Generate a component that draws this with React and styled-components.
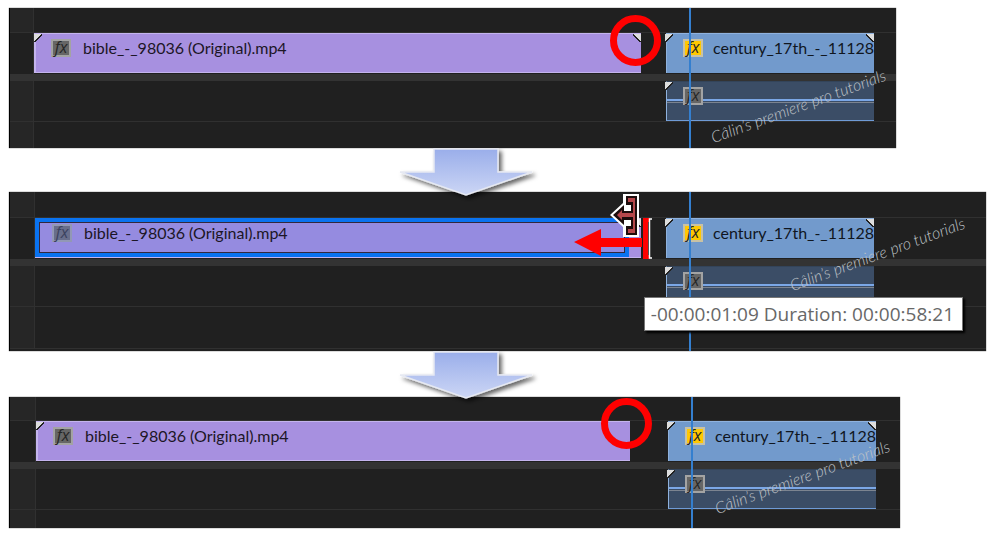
import React from 'react'
import styled, { createGlobalStyle, css } from 'styled-components'

const GlobalStyle = createGlobalStyle`
  * {
    box-sizing: border-box;
  }
  body {
    margin: 0;
    background: #fff;
    font-family: Lato, 'Open Sans', sans-serif;
  }
`

const Page = styled.main`
  padding: 8px 8px 8px 9px;
`

const Panel = styled.section`
  position: relative;
  margin-right: ${({ $inset }) => $inset}px;
  background: #202020;
  border-left: 1px solid #000;
  box-shadow: 0 0 1px #333;
`

const Track = styled.div`
  display: flex;
  height: ${({ $height }) => $height}px;
  border-bottom: ${({ $line }) => ($line ? '1px solid #303030' : 'none')};
`

const Gutter = styled.div`
  flex: none;
  width: ${({ $width }) => $width}px;
  background: ${({ $dark }) => ($dark ? '#202020' : '#262626')};
  border-right: 1px solid #303030;
`

const Divider = styled.div`
  height: 7px;
  background: #333;
`

const Lane = styled.div`
  flex: 1;
  min-width: 0;
  display: flex;
  padding-right: ${({ $tail }) => $tail}px;
`

const corner = css`
  content: '';
  position: absolute;
  top: 0;
  width: 8px;
  height: 8px;
`

const Clip = styled.div`
  position: relative;
  display: flex;
  align-items: flex-start;
  gap: 12px;
  height: 40px;
  padding: 5px 0 0 15px;
  white-space: nowrap;
  border-top: 1px solid #c4b4ee;
  border-left: 2px solid #c4b4ee;
  background: #a790e0;
  color: #1c1626;

  &::before {
    ${corner}
    left: -2px;
    background: linear-gradient(135deg, #ddd 0 45%, #222 45% 58%, transparent 58%);
  }
  &::after {
    ${corner}
    right: 0;
    display: ${({ $trimmed }) => ($trimmed ? 'none' : 'block')};
    background: linear-gradient(225deg, #ddd 0 45%, #222 45% 58%, transparent 58%);
  }
`

const MainClip = styled(Clip)`
  flex: 1;
  min-width: 0;
  border-bottom: 1px solid #c4b4ee;
`

const NextClip = styled(Clip)`
  flex: none;
  width: 208px;
  gap: 10px;
  margin-left: ${({ $gap }) => $gap}px;
  padding-left: 16px;
  border-color: #8fb2de;
  border-left-width: 1px;
  background: #729acc;
  color: #10161f;
`

const AudioClip = styled(NextClip)`
  height: 100%;
  margin-left: auto;
  border-top-color: #33445a;
  border-bottom: 1px solid #6f9bd6;
  background: linear-gradient(
    #3b4d66 0 17px,
    #7ba7e6 17px 19px,
    #3b4d66 19px 20px,
    #7c8490 20px 21px,
    #3b4d66 21px
  );

  &::after {
    display: none;
  }
`

const Name = styled.span`
  position: relative;
  z-index: 1;
  font-size: 16px;
  line-height: 18px;
`

const Badge = styled.span`
  flex: none;
  width: 20px;
  height: 18px;
  border: 2px solid ${({ $on }) => ($on ? '#c9c2a4' : '#a3a3a3')};
  background: ${({ $on }) => ($on ? '#ffc800' : '#666')};
  color: #262626;
  font: italic 16px/12px 'Open Sans', sans-serif;
  text-align: center;
`

const Selection = styled.div`
  position: absolute;
  inset: -1px 12px 0 -2px;
  border: 4px solid #0a73f0;
  outline: 1px solid #33283c;
  outline-offset: -5px;
  background: rgba(110, 130, 225, 0.3);
`

const Playhead = styled.div`
  position: absolute;
  z-index: 2;
  top: 0;
  bottom: 0;
  right: ${({ $right }) => $right}px;
  width: 2px;
  background: #347fcf;
`

const Ring = styled.div`
  position: absolute;
  z-index: 3;
  top: ${({ $top }) => $top}px;
  right: ${({ $right }) => $right}px;
  width: 51px;
  height: 51px;
  border: 7px solid #f00;
  border-radius: 50%;
`

const Watermark = styled.div`
  position: absolute;
  z-index: 3;
  right: ${({ $right }) => $right}px;
  top: ${({ $top }) => $top}px;
  color: #bfc2c6;
  font: italic 300 16px/20px Lato, sans-serif;
  white-space: nowrap;
  transform: rotate(-20deg);
`

const Tooltip = styled.div`
  position: absolute;
  z-index: 4;
  top: 105px;
  right: 23px;
  padding: 0 8px 0 6px;
  border: 1px solid #767676;
  background: #fff;
  box-shadow: 2px 2px 2px #000;
  color: #686868;
  font: 19px/32px 'Open Sans', sans-serif;
  white-space: nowrap;
`

const TrimDrawing = styled.svg`
  position: absolute;
  z-index: 3;
  top: 2px;
  right: 330px;
`

const Step = styled.div`
  position: relative;
  z-index: 5;
  height: ${({ $height }) => $height}px;
  padding-left: 39%;
`

const StepSvg = styled.svg`
  display: block;
  overflow: visible;
`

function FxBadge({ on }) {
  return <Badge $on={on}>fx</Badge>
}

function StepArrow({ height }) {
  return (
    <Step $height={height}>
      <StepSvg width="150" height="52">
        <defs>
          <linearGradient id="stepFill" x1="0" y1="0" x2="0" y2="1">
            <stop offset="0" stopColor="#9aaeea" />
            <stop offset="1" stopColor="#ccd6f5" />
          </linearGradient>
          <filter id="stepShadow" x="-10%" y="-10%" width="130%" height="140%">
            <feDropShadow dx="3" dy="3" stdDeviation="2" floodOpacity="0.6" />
          </filter>
        </defs>
        <path
          d="M42 1H106V24H140L74 47L8 24H42Z"
          fill="url(#stepFill)"
          stroke="#e6e9f2"
          strokeWidth="1.5"
          filter="url(#stepShadow)"
        />
      </StepSvg>
    </Step>
  )
}

function TrimMarks() {
  return (
    <TrimDrawing width="84" height="68" viewBox="0 0 84 68">
      <path d="M2 48L29 35V44H70V53H29V62Z" fill="#f00" />
      <path d="M71 24H78V28H76V61H78V65H71Z" fill="#f00" />
      <path d="M80 25H77.5V64H80" fill="none" stroke="#fff" strokeWidth="1.5" />
      <path d="M51 0H67V43H51V33L38 21L51 9Z" fill="#fff" />
      <path
        d="M54 2H65V41H54V32H59V26H52V31L41 21L52 11V17H59V11H54Z"
        fill="#1c0c0c"
      />
      <path
        d="M56 4H63V39H56V35H61V23H50V26L45 21L50 16V19H61V8H56Z"
        fill="#b5474b"
      />
    </TrimDrawing>
  )
}

function Timeline({
  inset,
  head,
  foot,
  gutter,
  gap,
  tail,
  watermarkTop,
  watermarkRight,
  trimmed,
  selected,
  lastLine,
  children,
}) {
  return (
    <Panel $inset={inset}>
      <Track $height={head} $line>
        <Gutter $width={gutter} />
      </Track>
      <Track $height={41}>
        <Gutter $width={gutter} $dark />
        <Lane $tail={tail}>
          <MainClip $trimmed={trimmed}>
            <FxBadge />
            <Name>bible_-_98036 (Original).mp4</Name>
            {selected && <Selection />}
          </MainClip>
          <NextClip $gap={gap}>
            <FxBadge on />
            <Name>century_17th_-_11128</Name>
          </NextClip>
        </Lane>
      </Track>
      <Divider />
      <Track $height={41} $line>
        <Gutter $width={gutter} />
        <Lane $tail={tail}>
          <AudioClip>
            <FxBadge />
          </AudioClip>
        </Lane>
      </Track>
      <Track $height={lastLine ? foot - 2 : foot} $line={lastLine}>
        <Gutter $width={gutter} />
      </Track>
      {lastLine && <Track $height={2} />}
      <Playhead $right={tail + 183} />
      <Watermark $top={watermarkTop} $right={watermarkRight}>
        Câlin’s premiere pro tutorials
      </Watermark>
      {children}
    </Panel>
  )
}

export default function App() {
  return (
    <>
      <GlobalStyle />
      <Page>
        <Timeline
          inset={96}
          head={25}
          foot={26}
          gutter={24}
          gap={25}
          tail={22}
          watermarkTop={88}
          watermarkRight={5}
        >
          <Ring $top={7} $right={235} />
        </Timeline>
        <StepArrow height={44} />
        <Timeline
          inset={6}
          head={26}
          foot={44}
          gutter={25}
          gap={25}
          tail={112}
          watermarkTop={52}
          watermarkRight={16}
          selected
          lastLine
        >
          <TrimMarks />
          <Tooltip role="tooltip">-00:00:01:09 Duration: 00:00:58:21</Tooltip>
        </Timeline>
        <StepArrow height={46} />
        <Timeline
          inset={92}
          head={24}
          foot={18}
          gutter={26}
          gap={38}
          tail={24}
          watermarkTop={70}
          watermarkRight={5}
          trimmed
        >
          <Ring $top={1} $right={248} />
        </Timeline>
      </Page>
    </>
  )
}
